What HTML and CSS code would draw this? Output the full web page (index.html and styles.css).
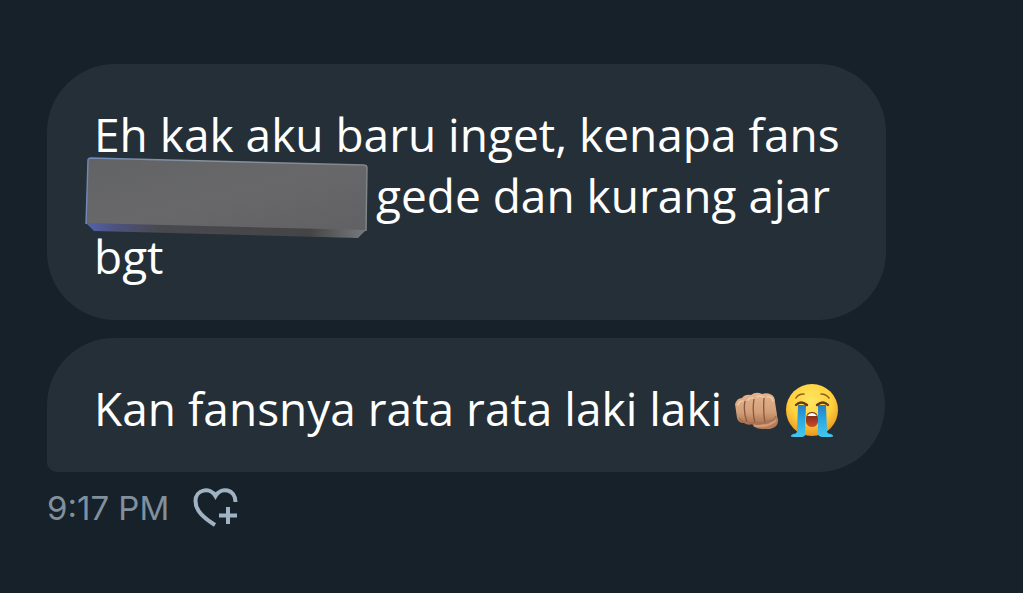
FILE: index.html
```html
<!DOCTYPE html>
<html lang="id">
<head>
<meta charset="utf-8">
<meta name="viewport" content="width=device-width, initial-scale=1">
<title>Messages</title>
<link rel="stylesheet" href="styles.css">
</head>
<body>
<main class="thread">
  <p class="bubble">Eh kak aku baru inget, kenapa fans <span class="hidden-name"><svg class="block" viewBox="0 0 284 84" role="img" aria-label="Hidden name">
    <defs>
      <linearGradient id="face" x1="0" y1="0" x2="1" y2="1"><stop offset="0" stop-color="#626365"/><stop offset=".5" stop-color="#68686a"/><stop offset="1" stop-color="#616163"/></linearGradient>
      <linearGradient id="base" x1="0" x2="1"><stop offset="0" stop-color="#5264ad"/><stop offset=".1" stop-color="#4d527f"/><stop offset=".26" stop-color="#48494f"/><stop offset=".8" stop-color="#454547"/><stop offset="1" stop-color="#777a7d"/></linearGradient>
      <linearGradient id="edge" x1="0" x2="1"><stop offset="0" stop-color="#7188ba"/><stop offset=".4" stop-color="#88929b"/><stop offset="1" stop-color="#81878b"/></linearGradient>
    </defs>
    <path d="M4 1 279 8Q282 8 282 11L281 74 1 67V66L3 4Q3 1 6 1Z" fill="url(#face)"/>
    <path d="M1 66 281 73 273 81 9 74Z" fill="url(#base)"/>
    <path d="M1 67 3 3Q3 1 6 1L279 8Q282 8 282 11L281 74" fill="none" stroke="url(#edge)" stroke-width="1.4"/>
  </svg></span> gede dan kurang ajar bgt</p>
  <p class="bubble bubble-last">Kan fansnya rata rata laki laki<span class="emojis"><svg class="fist" viewBox="0 0 46 38" role="img" aria-label="Fist">
    <defs>
      <linearGradient id="skin" x1="0" y1="0" x2="0" y2="1"><stop offset="0" stop-color="#e3b58e"/><stop offset=".6" stop-color="#d39f7a"/><stop offset="1" stop-color="#a9704f"/></linearGradient>
    </defs>
    <path d="M17 29Q19 37 28 37H36Q45 35 44 27L41 18 20 23Z" fill="#b47c5a"/>
    <path d="M20 33Q31 36 42 28" fill="none" stroke="#d09b76" stroke-width="3"/>
    <path d="M1 12Q3 6 8 6 11 2 17 3 22-1 28 2 34 0 38 3 41 5 41 10L43 23Q43 29 37 30 34 33 29 32 24 34 19 32 14 34 10 31 4 31 3 26Z" fill="url(#skin)"/>
    <path d="M11 9Q9 20 13 30M20 7Q18 20 21 31M30 6Q29 20 31 31" fill="none" stroke="#8b573e" stroke-width="1.3"/>
    <path d="M4 13Q5 9 9 9M14 8Q16 5 19 6M23 5Q26 3 29 5M33 5Q38 4 39 9" fill="none" stroke="#efc7a1" stroke-width="1.7" stroke-linecap="round"/>
    <path d="M5 26Q8 31 12 29M14 30Q18 32 21 30M23 30Q28 33 31 29M33 29Q39 30 42 24" fill="none" stroke="#a56d4d" stroke-width="1.2"/>
  </svg><svg class="crying" viewBox="0 0 54 54" role="img" aria-label="Loudly crying face">
    <defs>
      <radialGradient id="yellow" cx=".48" cy=".32" r=".68"><stop offset="0" stop-color="#ffe561"/><stop offset=".6" stop-color="#ffd13d"/><stop offset="1" stop-color="#e99620"/></radialGradient>
      <linearGradient id="tears" x1="0" y1="0" x2="0" y2="1"><stop offset="0" stop-color="#247fc4"/><stop offset=".5" stop-color="#2cabe3"/><stop offset="1" stop-color="#44c8ed"/></linearGradient>
      <linearGradient id="mouth" x1="0" y1="0" x2="0" y2="1"><stop offset="0" stop-color="#6a2515"/><stop offset="1" stop-color="#d24b28"/></linearGradient>
    </defs>
    <circle cx="27" cy="26" r="26" fill="url(#yellow)"/>
    <path d="M11 14Q13 10 19 10M36 10Q41 10 44 14" fill="none" stroke="#92601b" stroke-width="1.6" stroke-linecap="round"/>
    <path d="M13 21H21L20 49Q21 53 16 53H9Q3 53 8 50 12 50 12 47ZM33 21H41L42 47Q42 50 46 50 51 53 45 53H38Q33 53 33 49Z" fill="url(#tears)"/>
    <path d="M11 21Q16 16 22 21M32 21Q38 16 43 21" fill="none" stroke="#643b19" stroke-width="2.4" stroke-linecap="round"/>
    <path d="M21 35Q21 28 27 28 33 28 33 35V38Q32 43 27 43 22 43 21 38Z" fill="url(#mouth)"/>
    <path d="M22 32Q24 29 27 29 30 29 32 32Z" fill="#fff"/>
  </svg></span></p>
  <footer class="meta">
    <time datetime="21:17">9:17 PM</time>
    <button class="react" type="button" aria-label="Add reaction"><svg viewBox="0 0 46 40" fill="none" stroke="#9fb3c4" stroke-width="4">
      <path d="M22 37C11 30 2.500 23 2.500 13 2.500 1.500 17-1.500 22.500 8 28-1.500 42.500 1 42.500 14"/>
      <path d="M35 19V36M26 27.500H44"/>
    </svg></button>
  </footer>
</main>
</body>
</html>
```
FILE: styles.css
```css
* {
  box-sizing: border-box;
}

body {
  margin: 0;
  min-height: 100vh;
  background: #17212a;
  color: #fff;
  font-family: "Open Sans", "Noto Sans", sans-serif;
}

.thread {
  display: flex;
  flex-direction: column;
  align-items: flex-start;
  gap: 18px;
  padding: 64px 48px 0 47px;
}

.bubble {
  margin: 0;
  max-width: 839px;
  padding: 40px 46px 33px 47px;
  border-radius: 68px;
  background: #252f37;
  font-size: 46px;
  line-height: 61px;
}

.bubble-last {
  border-bottom-left-radius: 10px;
}

.hidden-name {
  display: inline-block;
  position: relative;
  width: 270px;
  height: 40px;
}

.block {
  position: absolute;
  left: -9px;
  top: -16px;
  width: 284px;
  height: 84px;
}

.emojis {
  display: inline-flex;
  align-items: center;
  gap: 5px;
  height: 54px;
  margin: -6px 0 0 12px;
  vertical-align: middle;
}

.fist {
  width: 46px;
  height: 38px;
}

.crying {
  width: 54px;
  height: 54px;
}

.meta {
  display: flex;
  align-items: center;
  gap: 24px;
  margin-top: -2px;
  color: #81909d;
  font-family: Inter, sans-serif;
  font-size: 33px;
  line-height: 40px;
}

.react {
  display: flex;
  padding: 0;
  border: 0;
  background: none;
}

.react svg {
  width: 46px;
  height: 40px;
}
```
